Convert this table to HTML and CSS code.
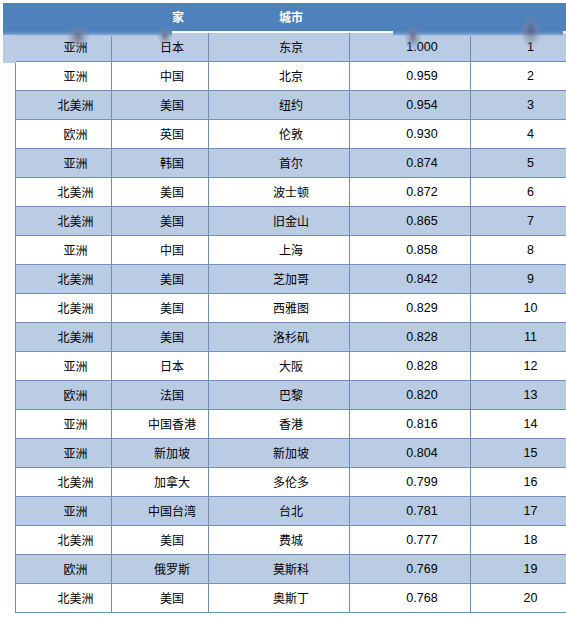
FILE: index.html
```html
<!DOCTYPE html>
<html lang="zh">
<head>
<meta charset="utf-8">
<link rel="stylesheet" href="styles.css">
</head>
<body>
<div class="page">
  <table class="rank">
    <colgroup>
      <col class="c1"><col class="c2"><col class="c3"><col class="c4"><col class="c5">
    </colgroup>
    <thead>
      <tr><th>大洲</th><th>国家</th><th>城市</th><th>指数</th><th>排名</th></tr>
    </thead>
    <tbody>
      <tr><td>亚洲</td><td>日本</td><td>东京</td><td class="num">1.000</td><td class="num">1</td></tr>
      <tr><td>亚洲</td><td>中国</td><td>北京</td><td class="num">0.959</td><td class="num">2</td></tr>
      <tr><td>北美洲</td><td>美国</td><td>纽约</td><td class="num">0.954</td><td class="num">3</td></tr>
      <tr><td>欧洲</td><td>英国</td><td>伦敦</td><td class="num">0.930</td><td class="num">4</td></tr>
      <tr><td>亚洲</td><td>韩国</td><td>首尔</td><td class="num">0.874</td><td class="num">5</td></tr>
      <tr><td>北美洲</td><td>美国</td><td>波士顿</td><td class="num">0.872</td><td class="num">6</td></tr>
      <tr><td>北美洲</td><td>美国</td><td>旧金山</td><td class="num">0.865</td><td class="num">7</td></tr>
      <tr><td>亚洲</td><td>中国</td><td>上海</td><td class="num">0.858</td><td class="num">8</td></tr>
      <tr><td>北美洲</td><td>美国</td><td>芝加哥</td><td class="num">0.842</td><td class="num">9</td></tr>
      <tr><td>北美洲</td><td>美国</td><td>西雅图</td><td class="num">0.829</td><td class="num">10</td></tr>
      <tr><td>北美洲</td><td>美国</td><td>洛杉矶</td><td class="num">0.828</td><td class="num">11</td></tr>
      <tr><td>亚洲</td><td>日本</td><td>大阪</td><td class="num">0.828</td><td class="num">12</td></tr>
      <tr><td>欧洲</td><td>法国</td><td>巴黎</td><td class="num">0.820</td><td class="num">13</td></tr>
      <tr><td>亚洲</td><td>中国香港</td><td>香港</td><td class="num">0.816</td><td class="num">14</td></tr>
      <tr><td>亚洲</td><td>新加坡</td><td>新加坡</td><td class="num">0.804</td><td class="num">15</td></tr>
      <tr><td>北美洲</td><td>加拿大</td><td>多伦多</td><td class="num">0.799</td><td class="num">16</td></tr>
      <tr><td>亚洲</td><td>中国台湾</td><td>台北</td><td class="num">0.781</td><td class="num">17</td></tr>
      <tr><td>北美洲</td><td>美国</td><td>费城</td><td class="num">0.777</td><td class="num">18</td></tr>
      <tr><td>欧洲</td><td>俄罗斯</td><td>莫斯科</td><td class="num">0.769</td><td class="num">19</td></tr>
      <tr><td>北美洲</td><td>美国</td><td>奥斯丁</td><td class="num">0.768</td><td class="num">20</td></tr>
    </tbody>
  </table>
  <div class="patch patch-left"></div>
  <div class="patch patch-left-low"></div>
  <div class="patch patch-right"></div>
  <div class="smudge s1"></div>
  <div class="smudge s2"></div>
  <div class="smudge s3"></div>
  <div class="smudge s4"></div>
</div>
</body>
</html>
```

FILE: styles.css
```css
html, body {
  margin: 0;
  padding: 0;
  background: #ffffff;
}

.page {
  position: relative;
  width: 566px;
  height: 617px;
  overflow: hidden;
  padding: 3px 0 0 15px;
  box-sizing: border-box;
}

.rank {
  border-collapse: collapse;
  table-layout: fixed;
  width: 551px;
  font-family: "Noto Sans CJK SC", "Liberation Sans", sans-serif;
  font-size: 12px;
  color: #000000;
}

.c1 { width: 96px; }
.c2 { width: 97px; }
.c3 { width: 141px; }
.c4 { width: 121px; }
.c5 { width: 96px; }

.rank thead th {
  background: #4f81bd;
  color: #ffffff;
  font-weight: bold;
  height: 28px;
  padding: 0 0 0 24px;
  text-align: center;
  border-bottom: 2px solid #ffffff;
  line-height: 28px;
}

.rank tbody td {
  height: 28px;
  padding: 0 0 0 24px;
  text-align: center;
  border: 1px solid #6f8fb6;
  line-height: 28px;
  white-space: nowrap;
}

.rank tbody tr:nth-child(odd) td {
  background: #b9cce4;
}

.rank tbody tr:nth-child(even) td {
  background: #ffffff;
}

.rank td.num {
  font-family: "Liberation Sans", Arial, sans-serif;
  font-size: 12.5px;
}

.patch {
  position: absolute;
}

.patch-left {
  left: 3px;
  top: 3px;
  width: 169px;
  height: 33px;
  background: linear-gradient(to bottom, #4f81bd 0, #4f81bd 28px, #6f97c8 31px, #b9cce4 33px);
}

.patch-left-low {
  left: 3px;
  top: 35px;
  width: 13px;
  height: 28px;
  background: #b9cce4;
}

.patch-right {
  left: 393px;
  top: 3px;
  width: 170px;
  height: 33px;
  background: linear-gradient(to bottom, #4f81bd 0, #4f81bd 28px, #7099c9 31px, #b9cce4 33px);
}

.smudge {
  position: absolute;
  border-radius: 50%;
  background: radial-gradient(ellipse at center, rgba(95, 90, 115, 0.75) 0, rgba(125, 130, 160, 0.4) 40%, rgba(185, 204, 228, 0) 72%);
}

.s1 { left: 66px; top: 24px; width: 24px; height: 26px; }
.s2 { left: 157px; top: 27px; width: 16px; height: 18px; }
.s3 { left: 404px; top: 24px; width: 18px; height: 26px; }
.s4 { left: 520px; top: 14px; width: 22px; height: 34px; }
```
